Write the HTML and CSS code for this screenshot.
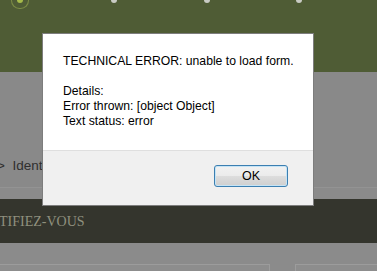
FILE: index.html
```html
<!DOCTYPE html>
<html>
<head>
<meta charset="utf-8">
<link rel="stylesheet" href="styles.css">
</head>
<body>
<div class="page">
  <header class="top">
    <span class="dot dot-active"></span>
    <span class="dot dot-a"></span>
    <span class="dot dot-b"></span>
    <span class="dot dot-c"></span>
  </header>
  <section class="crumbs">
    <div class="crumb">&gt;&nbsp; Identifiez-vous</div>
  </section>
  <section class="band">
    <h1 class="title">TIFIEZ-VOUS</h1>
  </section>
  <section class="lower">
    <div class="box box-left"></div>
    <div class="box box-right"></div>
  </section>
</div>
<div class="dialog">
  <div class="dialog-body">
    <p>TECHNICAL ERROR: unable to load form.</p>
    <p>&nbsp;</p>
    <p>Details:</p>
    <p>Error thrown: [object Object]</p>
    <p>Text status: error</p>
  </div>
  <div class="dialog-foot">
    <button class="ok">OK</button>
  </div>
</div>
</body>
</html>
```
FILE: styles.css
```css
html, body {
  margin: 0;
  padding: 0;
  width: 377px;
  height: 271px;
  overflow: hidden;
  background: #8b8b8b;
}
.page {
  position: relative;
  width: 377px;
  height: 271px;
  overflow: hidden;
}
.top {
  position: relative;
  height: 72px;
  background: #4f5c35;
}
.dot {
  position: absolute;
  top: -3px;
  width: 6px;
  height: 6px;
  border-radius: 50%;
  background: #c9cbc4;
}
.dot-a { left: 111px; }
.dot-b { left: 204px; }
.dot-c { left: 296px; }
.dot-active {
  left: 17px;
  background: #a6bb4a;
  box-shadow: 0 0 0 5px #4f5c35, 0 0 0 6px #7b8b45;
}
.crumbs {
  height: 116px;
  background: #898989;
  border-bottom: 1px solid #939393;
  box-sizing: border-box;
  padding-top: 86px;
}
.crumb {
  font-family: "Liberation Sans", Arial, sans-serif;
  font-size: 13.5px;
  line-height: 16px;
  color: #2f2f2f;
  margin-left: -3px;
  white-space: nowrap;
}
.band {
  height: 44px;
  margin-top: 11px;
  background: #34352d;
  overflow: hidden;
}
.title {
  margin: 0 0 0 -1px;
  padding-top: 14px;
  font-family: "Liberation Serif", "Times New Roman", serif;
  font-weight: normal;
  font-size: 14px;
  line-height: 18px;
  color: #8f907e;
  white-space: nowrap;
}
.lower {
  display: flex;
  gap: 25px;
  padding-top: 21px;
}
.box {
  height: 6px;
  border-top: 1px solid #9c9c9c;
  background: #8d8d8d;
}
.box-left {
  width: 270px;
  border-right: 1px solid #9c9c9c;
  margin-left: -1px;
}
.box-right {
  flex: 1;
  border-left: 1px solid #9c9c9c;
}
.dialog {
  position: absolute;
  left: 42px;
  top: 33px;
  width: 270px;
  height: 171px;
  border: 1px solid #7d7d7d;
  background: #ffffff;
  display: flex;
  flex-direction: column;
  font-family: "Liberation Sans", Arial, sans-serif;
  color: #000;
}
.dialog-body {
  flex: 1;
  padding: 20px 0 0 20px;
  font-size: 12.2px;
  line-height: 15px;
}
.dialog-body p {
  margin: 0;
  white-space: nowrap;
}
.dialog-foot {
  height: 55px;
  background: #f0f0f0;
  border-top: 1px solid #dfdfdf;
  display: flex;
  justify-content: flex-end;
  align-items: flex-start;
  padding: 14px 25px 0 0;
  box-sizing: border-box;
}
.ok {
  width: 74px;
  height: 22px;
  border: 1px solid #3c7fb1;
  border-radius: 3px;
  background: linear-gradient(#f2f2f2 0%, #ebebeb 50%, #dddddd 51%, #cfcfcf 100%);
  box-shadow: inset 0 0 0 1px #c5e4f6;
  font-family: "Liberation Sans", Arial, sans-serif;
  font-size: 12.5px;
  color: #000;
  padding: 0;
}
```
